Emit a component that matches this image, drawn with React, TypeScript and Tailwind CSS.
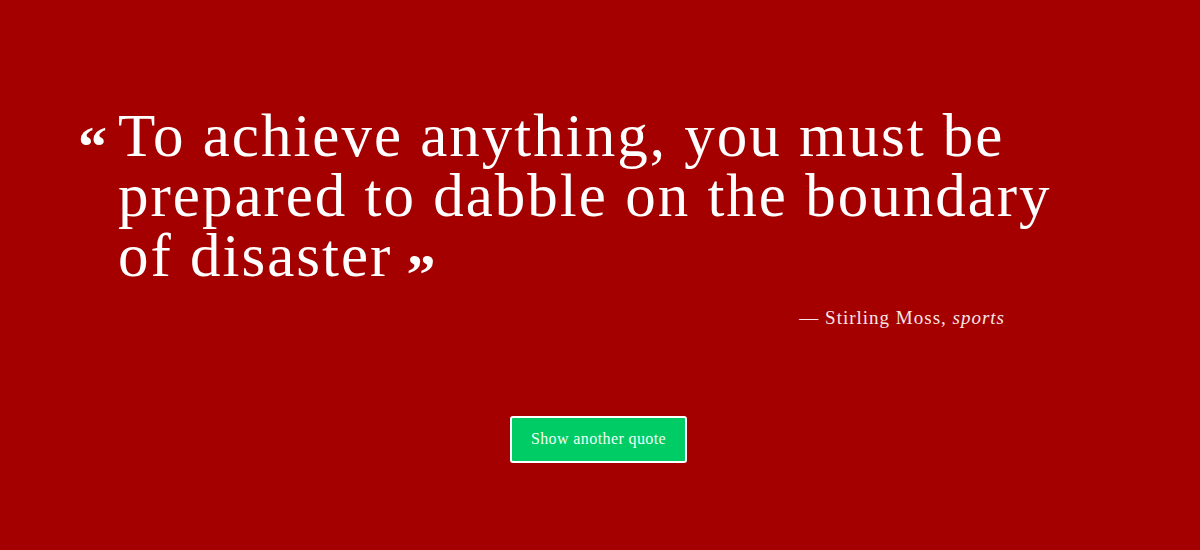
export default function App() {
  return (
    <div className="flex h-[550px] w-full flex-col items-center bg-[#a40000] font-['Liberation_Serif',serif] text-white">
      {/* quote */}
      <div className="mt-[106px] flex w-[1044px]">
        <span className="w-[40px] shrink-0 pt-[8px] text-[58px] font-bold leading-[66px]">“</span>
        <p className="w-[975px] text-[61px] leading-[60px] tracking-[2px]">
          To achieve anything, you must be prepared to dabble on the boundary of disaster
          <span className="relative top-[18px] ml-[14px] text-[58px] font-bold">”</span>
        </p>
      </div>
      <div className="mt-[17px] w-[1044px] pr-[117px] text-right text-[19px] tracking-[1px] text-[#f7e6e6]">
        — Stirling Moss, <em>sports</em>
      </div>

      <button className="mr-[3px] mt-[83px] h-[47px] w-[177px] rounded-[3px] border-2 border-white bg-[#00cc66] text-[16px] tracking-[0.4px] text-[#f0fff4]">
        Show another quote
      </button>
    </div>
  );
}
